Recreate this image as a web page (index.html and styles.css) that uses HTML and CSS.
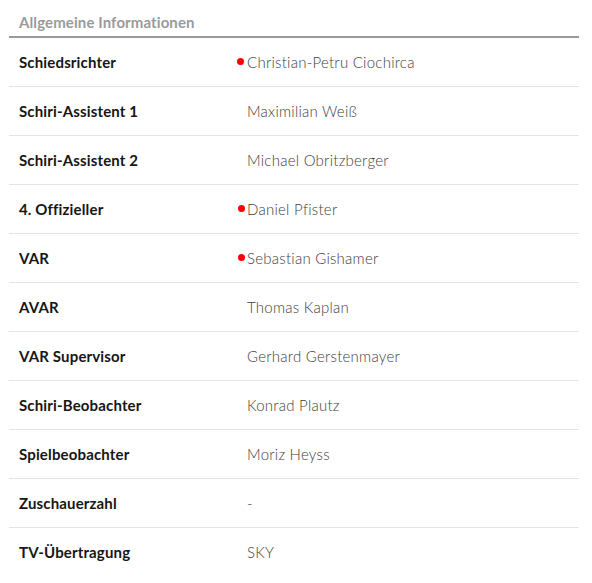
FILE: index.html
```html
<!DOCTYPE html>
<html lang="de">
<head>
<meta charset="utf-8">
<title>Allgemeine Informationen</title>
<link rel="stylesheet" href="styles.css">
</head>
<body>
<section class="panel">
  <h2 class="panel-title">Allgemeine Informationen</h2>
  <div class="row"><div class="label">Schiedsrichter</div><div class="value"><span class="dot dot-spaced"></span>Christian-Petru Ciochirca</div></div>
  <div class="row"><div class="label">Schiri-Assistent 1</div><div class="value">Maximilian Weiß</div></div>
  <div class="row"><div class="label">Schiri-Assistent 2</div><div class="value">Michael Obritzberger</div></div>
  <div class="row"><div class="label">4. Offizieller</div><div class="value"><span class="dot"></span>Daniel Pfister</div></div>
  <div class="row"><div class="label">VAR</div><div class="value"><span class="dot"></span>Sebastian Gishamer</div></div>
  <div class="row"><div class="label">AVAR</div><div class="value">Thomas Kaplan</div></div>
  <div class="row"><div class="label">VAR Supervisor</div><div class="value">Gerhard Gerstenmayer</div></div>
  <div class="row"><div class="label">Schiri-Beobachter</div><div class="value">Konrad Plautz</div></div>
  <div class="row"><div class="label">Spielbeobachter</div><div class="value">Moriz Heyss</div></div>
  <div class="row"><div class="label">Zuschauerzahl</div><div class="value">-</div></div>
  <div class="row"><div class="label">TV-Übertragung</div><div class="value">SKY</div></div>
</section>
</body>
</html>
```
FILE: styles.css
```css
html, body {
  margin: 0;
  padding: 0;
  background: #fff;
}
body {
  font-family: Lato, "Open Sans", sans-serif;
  font-size: 15px;
}
.panel {
  margin-left: 9px;
  width: 570px;
}
.panel-title {
  margin: 0;
  padding: 13px 0 5px 10px;
  height: 18px;
  line-height: 18px;
  font-size: 15px;
  font-weight: 700;
  letter-spacing: 0.1px;
  color: #9a9a9a;
  border-bottom: 2px solid #9a9a9a;
}
.row {
  display: flex;
  align-items: center;
  height: 47px;
  padding-bottom: 1px;
  border-bottom: 1px solid #e4e4e4;
  line-height: 18px;
}
.row:last-child {
  border-bottom: none;
}
.label {
  width: 228px;
  padding-left: 10px;
  font-weight: 700;
  letter-spacing: 0.15px;
  color: #161616;
}
.value {
  font-weight: 300;
  letter-spacing: 0.25px;
  color: #3e3e3e;
  display: flex;
  align-items: center;
}
.dot {
  display: inline-block;
  width: 7px;
  height: 7px;
  border-radius: 50%;
  background: #f00;
  margin-left: -9px;
  margin-right: 2px;
}
.dot-spaced {
  margin-left: -10px;
  margin-right: 3px;
}
```
